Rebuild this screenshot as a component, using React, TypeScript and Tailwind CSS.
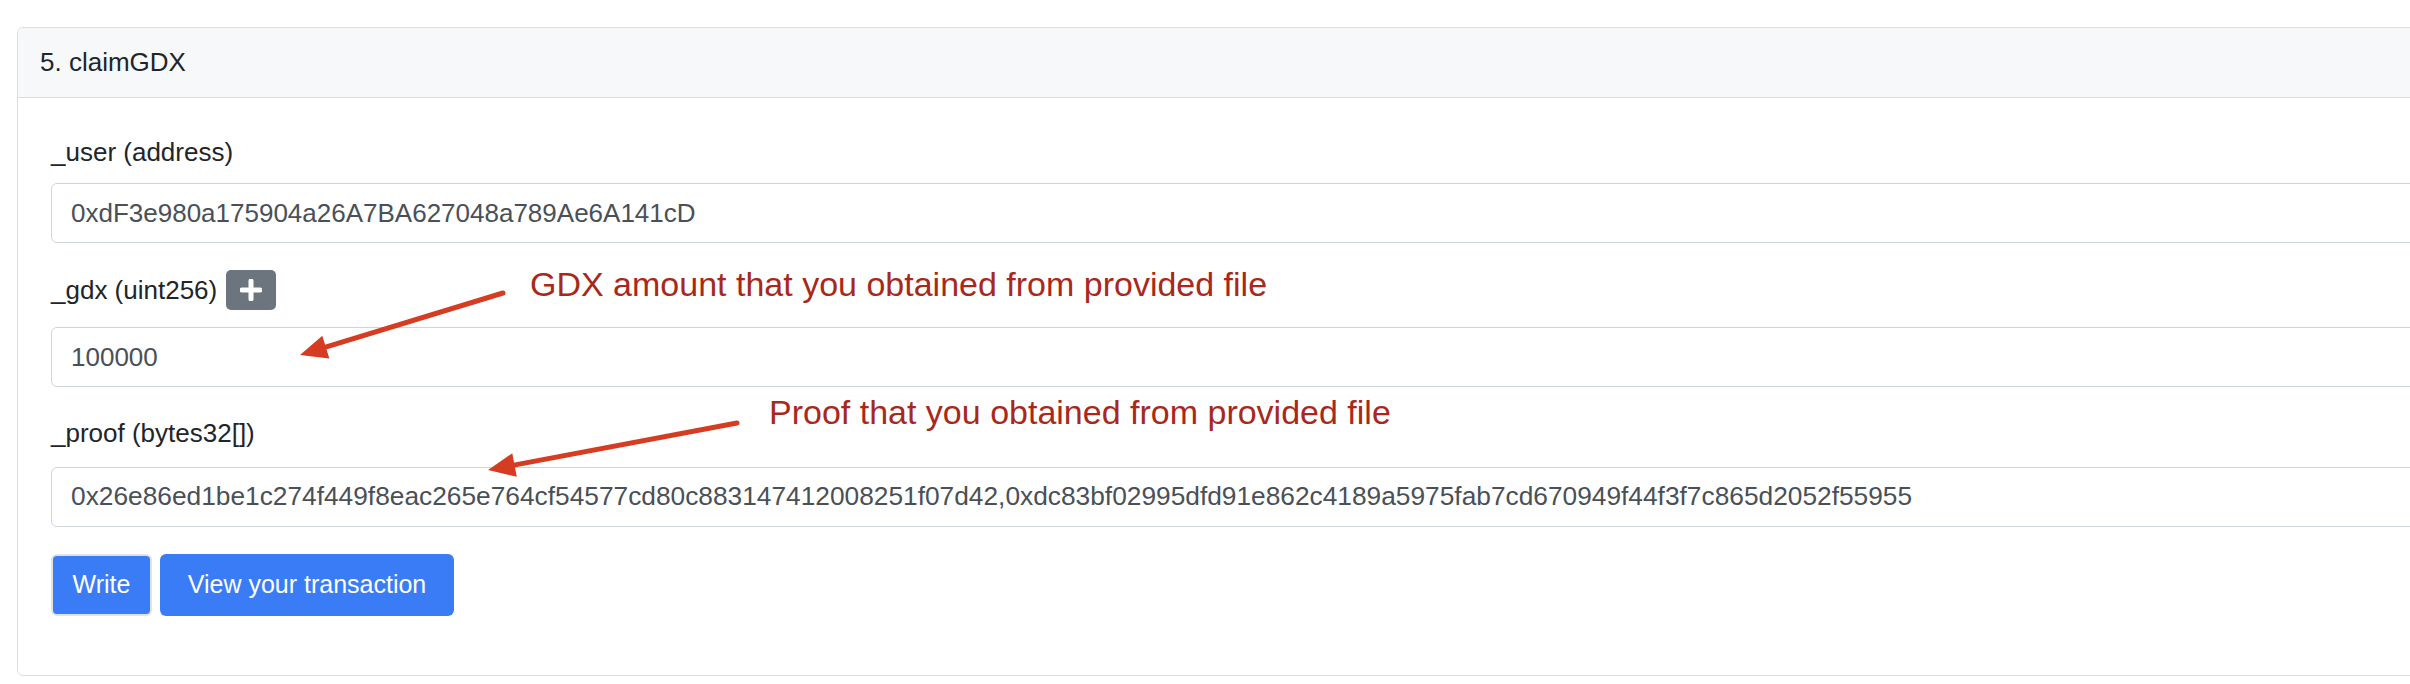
import React from 'react';

const PROOF =
  '0x26e86ed1be1c274f449f8eac265e764cf54577cd80c883147412008251f07d42,0xdc83bf02995dfd91e862c4189a5975fab7cd670949f44f3f7c865d2052f55955';

// arrow drawn from tail to tip, head as a filled triangle
function Arrow({ x1, y1, x2, y2 }: { x1: number; y1: number; x2: number; y2: number }) {
  const dx = x2 - x1;
  const dy = y2 - y1;
  const len = Math.hypot(dx, dy);
  const ux = dx / len;
  const uy = dy / len;
  const headLen = 27;
  const half = 12;
  const bx = x2 - ux * headLen;
  const by = y2 - uy * headLen;
  const nx = -uy * half;
  const ny = ux * half;
  return (
    <g>
      <line x1={x1} y1={y1} x2={bx + ux * 2} y2={by + uy * 2} stroke="#d63c22" strokeWidth={5} strokeLinecap="round" />
      <polygon points={`${x2},${y2} ${bx + nx},${by + ny} ${bx - nx},${by - ny}`} fill="#d63c22" />
    </g>
  );
}

export default function App() {
  return (
    <div className="relative w-[2410px] h-[684px] overflow-hidden bg-white" style={{ fontFamily: '"Liberation Sans", Arial, sans-serif' }}>
      <div className="pt-[27px] pl-[17px]">
        <div className="w-[2430px] h-[649px] border border-[#dadde1] rounded-[6px] overflow-hidden">
          <div className="h-[70px] bg-[#f7f8fa] border-b border-[#dadde1] flex items-center pl-[22px] text-[26px] text-[#212529]">
            5. claimGDX
          </div>
          <div className="pl-[33px] pt-[34px]">
            <div>
              <div className="flex items-center h-[40px] text-[26px] text-[#212529]">_user (address)</div>
              <div className="mt-[11px] h-[60px] border border-[#ced4da] rounded-[6px] flex items-center pl-[19px] text-[26px] text-[#495057]">
                0xdF3e980a175904a26A7BA627048a789Ae6A141cD
              </div>
            </div>

            <div className="mt-[27px]">
              <div className="flex items-center gap-[9px] h-[40px] text-[26px] text-[#212529]">
                <span>_gdx (uint256)</span>
                <span className="w-[50px] h-[40px] rounded-[5px] bg-[#6c757d] flex items-center justify-center">
                  <svg width="22" height="22" viewBox="0 0 22 22">
                    <path d="M11 2v18M2 11h18" stroke="#fff" strokeWidth="5" strokeLinecap="round" />
                  </svg>
                </span>
              </div>
              <div className="mt-[17px] h-[60px] border border-[#ced4da] rounded-[6px] flex items-center pl-[19px] text-[26px] text-[#495057]">
                100000
              </div>
            </div>

            <div className="mt-[26px]">
              <div className="flex items-center h-[40px] text-[26px] text-[#212529]">_proof (bytes32[])</div>
              <div className="mt-[14px] h-[60px] border border-[#ced4da] rounded-[6px] flex items-center pl-[19px] text-[26.3px] text-[#495057] whitespace-nowrap">
                {PROOF}
              </div>
            </div>

            <div className="mt-[27px] flex gap-[8px]">
              <button className="w-[101px] h-[62px] rounded-[6px] bg-[#3a7cf5] border-2 border-[#dfe2e7] text-white text-[25px]">
                Write
              </button>
              <button className="w-[294px] h-[62px] rounded-[6px] bg-[#3a7cf5] text-white text-[25px]">
                View your transaction
              </button>
            </div>
          </div>
        </div>
      </div>

      {/* annotations over the form */}
      <div className="absolute left-[530px] top-[264px] text-[34px] leading-[40px] text-[#a8291c] whitespace-nowrap">
        GDX amount that you obtained from provided file
      </div>
      <div className="absolute left-[769px] top-[392px] text-[34px] leading-[40px] text-[#a8291c] whitespace-nowrap">
        Proof that you obtained from provided file
      </div>
      <svg className="absolute inset-0 pointer-events-none" width="2410" height="684">
        <Arrow x1={503} y1={293} x2={300} y2={355} />
        <Arrow x1={737} y1={423} x2={488} y2={470} />
      </svg>
    </div>
  );
}
